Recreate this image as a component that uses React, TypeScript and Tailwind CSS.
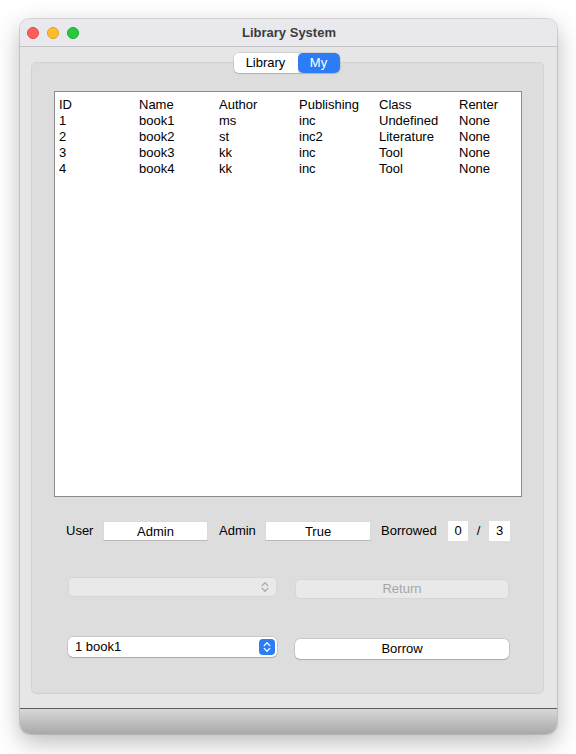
import React from 'react';

const COLUMNS = ['ID', 'Name', 'Author', 'Publishing', 'Class', 'Renter'];

const BOOKS: string[][] = [
  ['1', 'book1', 'ms', 'inc', 'Undefined', 'None'],
  ['2', 'book2', 'st', 'inc2', 'Literature', 'None'],
  ['3', 'book3', 'kk', 'inc', 'Tool', 'None'],
  ['4', 'book4', 'kk', 'inc', 'Tool', 'None'],
];

const Chevrons: React.FC<{ color: string }> = ({ color }) => (
  <svg width="8" height="12" viewBox="0 0 8 12" fill="none">
    <path d="M1.2 4.6 L4 1.8 L6.8 4.6" stroke={color} strokeWidth="1.3" strokeLinecap="round" strokeLinejoin="round" />
    <path d="M1.2 7.4 L4 10.2 L6.8 7.4" stroke={color} strokeWidth="1.3" strokeLinecap="round" strokeLinejoin="round" />
  </svg>
);

const Row: React.FC<{ cells: string[] }> = ({ cells }) => (
  <div className="flex h-4 items-center">
    {cells.map((c, i) => (
      <span key={i} className="w-20 shrink-0 leading-4">{c}</span>
    ))}
  </div>
);

const Field: React.FC<{ value: string; className: string }> = ({ value, className }) => (
  <div
    className={`h-5 bg-white border border-[#dadada] border-b-[#b8b8b8] flex items-center justify-center leading-none pt-[1px] ${className}`}
  >
    {value}
  </div>
);

export default function App() {
  return (
    <div
      className="w-[576px] h-[754px] bg-white pt-[19px] pl-[20px] text-[13px] text-black"
      style={{ fontFamily: '"Liberation Sans", Arial, sans-serif' }}
    >
      <div className="w-[537px] h-[715px] rounded-[10px] overflow-hidden flex flex-col shadow-[0_0_0_1px_rgba(0,0,0,0.12),0_8px_24px_rgba(0,0,0,0.28)]">
        {/* title bar */}
        <div className="h-[28px] shrink-0 bg-[#e9e9ed] border-b border-[#c3c3c6] flex items-center relative">
          <div className="flex gap-2 pl-[7px]">
            <span className="w-3 h-3 rounded-full bg-[#fe5f57] border border-[#e2463f]" />
            <span className="w-3 h-3 rounded-full bg-[#febc2e] border border-[#e1a116]" />
            <span className="w-3 h-3 rounded-full bg-[#28c840] border border-[#1aab29]" />
          </div>
          <div className="absolute inset-0 flex items-center justify-center font-bold text-[#3c3c3c] text-[13px] pl-[1px]">
            Library System
          </div>
        </div>

        {/* body */}
        <div className="flex-1 bg-[#e6e6e6] flex flex-col pt-[6px] pl-[11px] pr-[13px] pb-[14px]">
          <div className="flex justify-center relative z-10 pr-[2px]">
            <div className="flex h-5 rounded-[5px] overflow-hidden shadow-[0_0_0_0.5px_rgba(0,0,0,0.18),0_1px_1px_rgba(0,0,0,0.12)]">
              <div className="w-16 bg-white flex items-center justify-center">Library</div>
              <div className="w-[42px] bg-[#2c7cf6] text-white flex items-center justify-center rounded-[5px]">My</div>
            </div>
          </div>

          <div className="flex-1 -mt-[11px] bg-[#dddddd] border border-[#d2d2d2] rounded-[5px] flex flex-col pt-[28px] pl-[22px] pr-[21px]">
            {/* table */}
            <div className="w-[468px] h-[406px] bg-white border border-[#8c8c8c] pt-[5px] pl-[4px]">
              <Row cells={COLUMNS} />
              {BOOKS.map((b) => (
                <Row key={b[0]} cells={b} />
              ))}
            </div>

            {/* info row */}
            <div className="flex items-center h-5 mt-[24px]">
              <span className="ml-[12px] w-[37px]">User</span>
              <Field value="Admin" className="w-[105px]" />
              <span className="ml-[11px] w-[46px]">Admin</span>
              <Field value="True" className="w-[106px]" />
              <span className="ml-[10px] w-[67px]">Borrowed</span>
              <div className="w-5 h-5 bg-white flex items-center justify-center">0</div>
              <span className="w-[21px] text-center">/</span>
              <div className="w-[21px] h-5 bg-white flex items-center justify-center">3</div>
            </div>

            {/* return row */}
            <div className="flex items-start mt-[36px] pl-[14px]">
              <div className="w-[209px] h-5 rounded-[5px] bg-[#e9e9e9] border border-[#d6d6d6] flex items-center justify-end pr-[7px]">
                <Chevrons color="#a9a9a9" />
              </div>
              <div className="ml-[18px] mt-[2px] w-[214px] h-5 rounded-[5px] bg-[#e9e9e9] border border-[#d6d6d6] flex items-center justify-center text-[#a6a6a6]">
                Return
              </div>
            </div>

            {/* borrow row */}
            <div className="flex items-start mt-[38px] pl-[14px]">
              <div className="w-[209px] h-5 rounded-[5px] bg-white shadow-[0_0_0_0.5px_rgba(0,0,0,0.2),0_1px_1px_rgba(0,0,0,0.15)] flex items-center justify-between pl-[7px] pr-[2px]">
                <span>1 book1</span>
                <span className="w-4 h-4 rounded-[4px] bg-[#2c7cf6] flex items-center justify-center">
                  <Chevrons color="#ffffff" />
                </span>
              </div>
              <div className="ml-[18px] mt-[2px] w-[214px] h-5 rounded-[5px] bg-white shadow-[0_0_0_0.5px_rgba(0,0,0,0.2),0_1px_1px_rgba(0,0,0,0.15)] flex items-center justify-center">
                Borrow
              </div>
            </div>
          </div>
        </div>

        {/* bottom bar */}
        <div className="h-[26px] shrink-0 border-t border-[#5c5c5c] bg-gradient-to-b from-[#d8d8d8] to-[#a9a9a9]" />
      </div>
    </div>
  );
}
